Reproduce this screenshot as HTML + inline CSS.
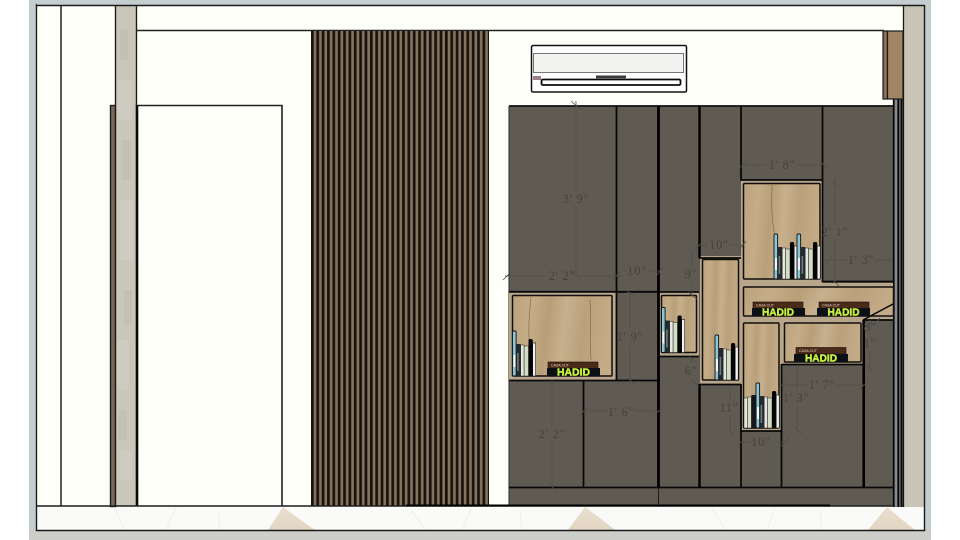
<!DOCTYPE html>
<html><head><meta charset="utf-8">
<style>
html,body{margin:0;padding:0;background:#fff;width:960px;height:540px;overflow:hidden}
svg{display:block;filter:blur(.3px)}
.d{font-family:"Liberation Serif",serif;font-size:12.5px;fill:#46433c;text-anchor:middle;letter-spacing:.7px}
.h{font-family:"Liberation Sans",sans-serif;font-weight:bold;font-size:10.5px;fill:#c8f03c;text-anchor:middle;stroke:#c8f03c;stroke-width:.45}
.c{font-family:"Liberation Sans",sans-serif;font-size:3.6px;fill:#e6d8c4}
</style></head><body>
<svg width="960" height="540" viewBox="0 0 960 540" xmlns="http://www.w3.org/2000/svg">
<defs>
<pattern id="sl" x="311" y="0" width="5.36" height="10" patternUnits="userSpaceOnUse">
<rect width="5.36" height="10" fill="#85735e"/><rect x="0" width="2.7" height="10" fill="#17120d"/>
</pattern>
<linearGradient id="w" x1="0" x2="1" y1="0" y2="0.1">
<stop offset="0" stop-color="#bba27c"/><stop offset=".2" stop-color="#c5ad88"/><stop offset=".38" stop-color="#b89f78"/>
<stop offset=".55" stop-color="#c7b08e"/><stop offset=".75" stop-color="#baa17b"/><stop offset="1" stop-color="#c4ab87"/>
</linearGradient>
<linearGradient id="fl" x1="0" x2="0" y1="0" y2="1"><stop offset="0" stop-color="#e9dfd0"/><stop offset="1" stop-color="#e3d5c2"/></linearGradient>
<g id="bk">
<rect x="0" y="0" width="3.6" height="45" rx="1" fill="#8cc6d6" stroke="#111" stroke-width=".9"/>
<rect x="1" y="24" width="2" height="12" fill="#f0f4f2"/>
<rect x="3.6" y="13" width="4.6" height="32" fill="#23292c"/>
<rect x="4.6" y="22" width="1.6" height="18" fill="#6f7c7a"/>
<rect x="8.2" y="14" width="3.4" height="31" fill="#e4e6e0" stroke="#222" stroke-width=".5"/>
<rect x="11.6" y="15" width="4.4" height="30" fill="#d4dcc4" stroke="#222" stroke-width=".5"/>
<rect x="16" y="8" width="4.2" height="37" rx="1.6" fill="#050505"/>
<rect x="20.2" y="12" width="3" height="33" fill="#f0f0ee" stroke="#111" stroke-width=".6"/>
</g>
</defs>

<!-- backdrop -->
<rect width="960" height="540" fill="#fff"/>
<rect x="29" y="0" width="902" height="540" fill="#c4cdd0"/>
<rect x="29" y="531" width="902" height="9" fill="#cdcdca"/>
<rect x="37" y="6" width="887" height="524" fill="#fffffa"/>

<!-- floor -->
<rect x="37" y="507" width="887" height="23" fill="#fafaf8"/>
<polygon points="283,507 268,530 315,530 298,518" fill="url(#fl)"/>
<polygon points="585,507 568,530 615,530 600,518" fill="url(#fl)"/>
<polygon points="887,507 868,530 915,530 900,518" fill="url(#fl)"/>
<g fill="none" stroke="#f0efeb" stroke-width="1">
<path d="M115 508L124 530M176 507L166 530M218 510L220 530"/>
<path d="M472 507L462 530M410 508L425 530M520 510L522 530"/>
<path d="M775 507L767 530M712 508L725 530M820 510L822 530"/>
</g>

<!-- left pillar + strip -->
<rect x="110.5" y="105.5" width="5" height="401" fill="#7a6a55" stroke="#1c1c1c" stroke-width="1.4"/>
<rect x="115" y="6" width="21" height="500" fill="#c9c6ba"/>
<g fill="#cecbc0"><rect x="118" y="80" width="14" height="40"/><rect x="120" y="200" width="13" height="60"/><rect x="117" y="340" width="12" height="50"/><rect x="120" y="450" width="12" height="30"/></g>
<g fill="#c3c0b4"><rect x="120" y="30" width="8" height="30"/><rect x="122" y="140" width="9" height="40"/><rect x="124" y="290" width="8" height="35"/><rect x="118" y="410" width="9" height="30"/></g>
<path d="M115.5 6V506M136.5 6V106" stroke="#1c1c1c" stroke-width="1.4" fill="none"/>
<path d="M136.5 30.5H884" stroke="#222" stroke-width="1.6"/>
<path d="M61 6V506" stroke="#222" stroke-width="1.5"/>
<!-- door -->
<path d="M137.5 105.5H282V506" fill="none" stroke="#222" stroke-width="1.6"/>
<path d="M137 105V506" stroke="#0a0a0a" stroke-width="2.6"/>

<!-- slats -->
<rect x="311" y="31" width="178" height="475" fill="url(#sl)"/>

<!-- AC -->
<rect x="531.5" y="45.5" width="155" height="46.5" rx="1.5" fill="#fdfdfd" stroke="#111" stroke-width="1.5"/>
<rect x="533.5" y="53.5" width="150" height="19" fill="#f2f2f0" stroke="#777" stroke-width="1"/>
<rect x="596" y="75.5" width="30" height="2.8" fill="#3a3a3a"/>
<rect x="533" y="76" width="8" height="4" fill="#a0808c"/>
<rect x="541.5" y="79.5" width="139" height="5.5" rx="1.5" fill="#fff" stroke="#0a0a0a" stroke-width="1.8"/>

<!-- cabinet -->
<rect x="509" y="106" width="384" height="400" fill="#5f5b53"/>
<path d="M509 106H893" stroke="#111" stroke-width="1.7"/>
<path d="M509 106V505" stroke="#34342f" stroke-width="1.1"/>

<!-- right column -->
<rect x="893" y="99" width="11" height="408" fill="#55565a"/>
<path d="M893.6 99V507M898.3 99V507M901.5 99V507" stroke="#060606" stroke-width="1.5"/>
<path d="M896 99V507" stroke="#96989c" stroke-width="1.6"/>
<path d="M900 99V507" stroke="#6a6c70" stroke-width="1"/>
<rect x="904" y="6" width="20" height="501" fill="#c9c5b6"/>
<path d="M903.5 6V507" stroke="#151515" stroke-width="1.3"/>
<rect x="883" y="31" width="4.5" height="68" fill="#8a7155" stroke="#1a1a1a" stroke-width="1.2"/>
<rect x="887.5" y="31" width="15.5" height="68" fill="#a08463" stroke="#1a1a1a" stroke-width="1.2"/>

<!-- niche frames -->
<g fill="#b8a68c">
<rect x="509" y="292" width="107" height="88"/>
<rect x="659" y="292" width="40" height="64"/>
<rect x="700" y="256" width="41" height="128"/>
<rect x="741" y="180" width="82" height="103"/>
<rect x="741" y="283" width="152" height="37"/>
<rect x="741" y="318" width="41" height="113"/>
<rect x="781" y="318" width="83" height="47"/>
</g>
<g fill="url(#w)" stroke="#120e0b" stroke-width="1.5">
<rect x="512.5" y="295.5" width="99.5" height="80.5" rx="1"/>
<rect x="661.5" y="295.5" width="35" height="57" rx="1"/>
<rect x="702.5" y="259.5" width="36" height="120.5" rx="1"/>
<rect x="743.5" y="183.5" width="76.5" height="95.5" rx="1"/>
<rect x="743.5" y="287" width="150" height="29" rx="1"/>
<rect x="743.5" y="323" width="35.5" height="105" rx="1"/>
<rect x="784.5" y="323" width="76.5" height="39" rx="1"/>
</g>
<g fill="none" stroke="#8b7256" stroke-width=".8">
<path d="M531 297C529 315 528 335 530 350M590 300C592 320 589 340 591 360"/>
<path d="M772 185C771 205 772 225 776 240"/>
</g>

<!-- black panel lines -->
<g fill="none" stroke="#080808" stroke-width="1.8">
<path d="M509 291.8H658M509 380.5H658M616.5 106V380"/>
<path d="M583.5 380V488"/>
<path d="M509 487.5H893"/>
<path d="M659 292H699M659 356.5H699"/>
<path d="M699 258H741M741 106V180H823M700 384.5H741M741 431H781M741 384V488"/>
<path d="M822.5 106V281.5H893M782 364.5H864M781.5 364V488"/>
<path d="M863.5 320H893"/>
</g>
<path d="M658.5 106V488" stroke="#000" stroke-width="2.8"/>
<path d="M863.7 320V488" stroke="#000" stroke-width="2.6"/>
<path d="M699.5 106V258" stroke="#000" stroke-width="2.4"/>
<path d="M699.5 384V488" stroke="#000" stroke-width="2.4"/>
<path d="M658.5 488V505" stroke="#1c1c1c" stroke-width="1"/>
<path d="M863 320L893 304" stroke="#050505" stroke-width="1.5"/>

<!-- floor line -->
<path d="M37 506H893" stroke="#1c1c1c" stroke-width="1.6"/>
<path d="M406 505.5H830" stroke="#000" stroke-width="2"/>
<path d="M37 5.5H924.5V530.5H36.5V5Z" fill="none" stroke="#1a1a1a" stroke-width="1.4"/>

<!-- books -->
<use href="#bk" x="512.5" y="331"/>
<use href="#bk" x="661.5" y="307.5"/>
<use href="#bk" x="715" y="335"/>
<use href="#bk" x="774" y="234"/>
<use href="#bk" x="797" y="234"/>
<use href="#bk" x="756" y="383"/>
<g><rect x="744" y="398" width="3.4" height="30" fill="#e4e6e0" stroke="#222" stroke-width=".5"/><rect x="747.4" y="397" width="4" height="31" fill="#d4dcc4" stroke="#222" stroke-width=".5"/><rect x="751.4" y="395" width="4.6" height="33" fill="#15181a"/></g>

<!-- HADID stacks -->
<rect x="548" y="362" width="50" height="6.5" fill="#4a2a18" stroke="#1a0e08" stroke-width=".6"/>
<rect x="547" y="368" width="53" height="8" rx=".5" fill="#0c0f14"/>
<text class="c" x="551" y="366.6">CASA CUT</text>
<text class="h" x="573.5" y="375.6" textLength="33" lengthAdjust="spacingAndGlyphs">HADID</text>

<rect x="753" y="302" width="50" height="6.5" fill="#4a2a18" stroke="#1a0e08" stroke-width=".6"/>
<rect x="752" y="308" width="53" height="8" rx=".5" fill="#0c0f14"/>
<text class="c" x="756" y="306.6">CASA CUT</text>
<text class="h" x="778" y="315.6" textLength="32" lengthAdjust="spacingAndGlyphs">HADID</text>

<rect x="819" y="302" width="50" height="6.5" fill="#4a2a18" stroke="#1a0e08" stroke-width=".6"/>
<rect x="817" y="308" width="53" height="8" rx=".5" fill="#0c0f14"/>
<text class="c" x="822" y="306.6">CASA CUT</text>
<text class="h" x="843.5" y="315.6" textLength="32" lengthAdjust="spacingAndGlyphs">HADID</text>

<rect x="796" y="347.5" width="50" height="6.5" fill="#4a2a18" stroke="#1a0e08" stroke-width=".6"/>
<rect x="794" y="354" width="54" height="8" rx=".5" fill="#0c0f14"/>
<text class="c" x="799" y="352">CASA CUT</text>
<text class="h" x="821" y="361.6" textLength="32" lengthAdjust="spacingAndGlyphs">HADID</text>

<!-- dimension lines -->
<g fill="none" stroke="#514e47" stroke-width=".8">
<path d="M576 101V191M576 207V276M571 101L580 109M571 271L580 279"/>
<path d="M505 276H548M576 276H622M503 280L511 272M612 280L620 272"/>
<path d="M622 271H627M648 271H660M657 275L663 267"/>
<path d="M630 292V328M630 345V380M627 291L635 297M627 378L635 384"/>
<path d="M692 250V266M692 282V296M688 292L697 299"/>
<path d="M699 245H708M731 245H743M695 250L703 241M739 250L746 241"/>
<path d="M742 165H767M797 165H823M738 170L746 161M819 160L827 168"/>
<path d="M835 178V224M835 240V283M831 180L839 186M831 278L839 286"/>
<path d="M823 260H848M875 260H893M825 264L833 256"/>
<path d="M552 380V426M552 442V486M547 481L556 491"/>
<path d="M583 411H608M634 411H659M580 415L588 407M655 415L663 407"/>
<path d="M691 357V363M689 356L697 363M691 379L699 387"/>
<path d="M730 385V400M730 416V431M726 428L735 436"/>
<path d="M797 366V390M797 406V431M793 426L802 434"/>
<path d="M782 385H808M836 385H864M778 389L786 381M860 389L868 381"/>
<path d="M741 442H750M773 442H785M737 446L745 438M781 446L789 438"/>
<path d="M870 320V334M870 351V370M866 365L874 372M880 318L873 326"/>
</g>
<text class="d" x="576" y="203">3' 9"</text>
<text class="d" x="562" y="280">2' 2"</text>
<text class="d" x="637" y="275">10"</text>
<text class="d" x="630" y="341">1' 9"</text>
<text class="d" x="691" y="278">9"</text>
<text class="d" x="719" y="249">10"</text>
<text class="d" x="782" y="169">1' 8"</text>
<text class="d" x="835" y="236">2' 1"</text>
<text class="d" x="861" y="264">1' 3"</text>
<text class="d" x="552" y="438">2' 2"</text>
<text class="d" x="621" y="416">1' 6"</text>
<text class="d" x="691" y="375">6"</text>
<text class="d" x="729" y="412">11"</text>
<text class="d" x="796" y="402">1' 3"</text>
<text class="d" x="822" y="389">1' 7"</text>
<text class="d" x="761" y="446">10"</text>
<text class="d" x="870" y="331">8"</text>
<text class="d" x="870" y="347">1"</text>
</svg>
</body></html>
